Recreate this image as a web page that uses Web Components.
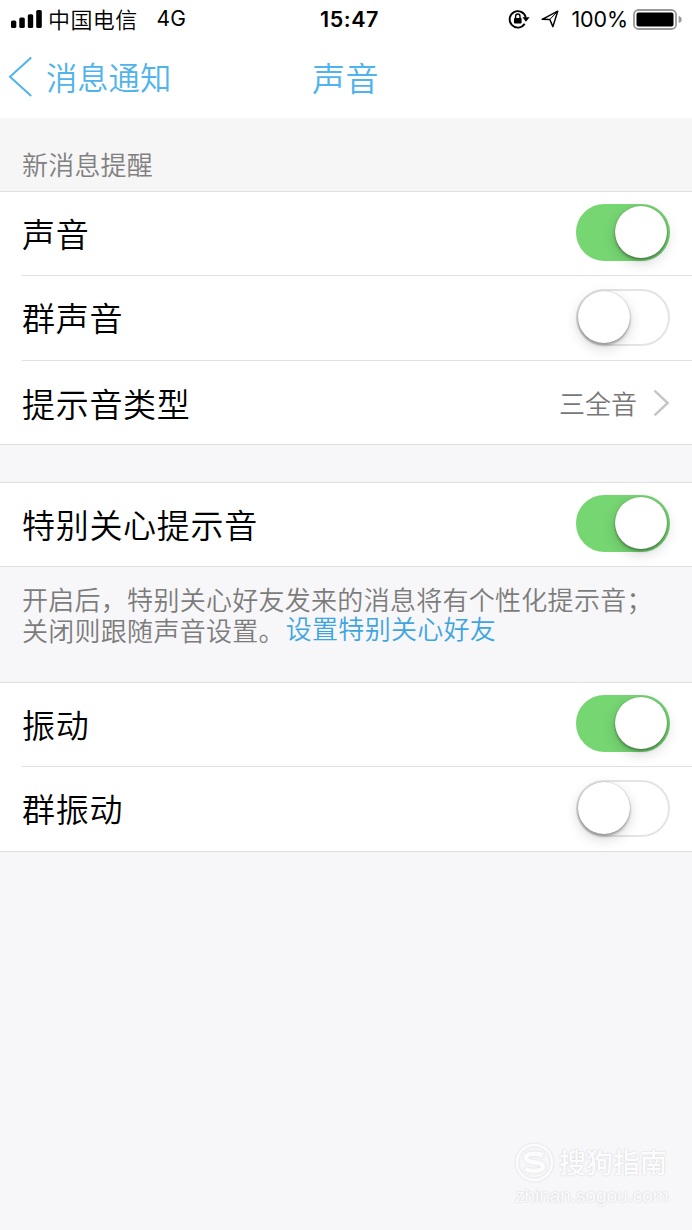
<!DOCTYPE html>
<html lang="zh-CN">
<head>
<meta charset="utf-8">
<title>声音</title>
<style>
html,body{margin:0;background:#f7f7f9}
body{font-family:"Noto Sans CJK SC","Noto Sans",sans-serif;color:#000;font-weight:350}
</style>
</head>
<body>
<settings-screen></settings-screen>
<script>
const define=(name,html,setup)=>customElements.define(name,class extends HTMLElement{
  constructor(){super();this.attachShadow({mode:'open'}).innerHTML=html;}
  connectedCallback(){if(setup)setup(this,this.shadowRoot);}
});

define('status-bar',`
<style>
:host{display:grid;grid-template-columns:1fr auto 1fr;align-items:center;height:38px;padding:0 10px 0 11px;font-size:22px;line-height:38px;box-sizing:border-box}
.side{display:flex;align-items:center;height:38px}
.right{justify-content:flex-end}
.latin{font-family:Inter,sans-serif;font-size:21.5px;font-weight:400}
.carrier{margin:-3px 0 0 6px;letter-spacing:.4px}
.net{margin-left:19px;font-size:21px}
.time{font-family:Inter,sans-serif;font-weight:600;font-size:21.5px;letter-spacing:.55px;padding-left:6px}
.pct{margin:0 5px 0 12px;letter-spacing:-.1px}
svg{display:block;flex:none}
</style>
<div class="side">
<svg width="31" height="19" viewBox="0 0 31 19"><rect x="0" y="10.5" width="5.3" height="7.5" rx="1.6"/><rect x="8.3" y="7.5" width="5.5" height="10.5" rx="1.6"/><rect x="16.8" y="4.2" width="5.4" height="13.8" rx="1.6"/><rect x="25.2" y="0" width="5.6" height="18" rx="1.6"/></svg>
<span class="carrier">中国电信</span><span class="latin net">4G</span></div>
<div class="time">15:47</div>
<div class="side right">
<svg width="22" height="20" viewBox="0 0 22 20"><path d="M16.7 14.8A8.2 8.2 0 1 1 17.8 8.5" fill="none" stroke="#000" stroke-width="1.8"/><path d="M14.4 8.2h7.2L18 12.7z"/><rect x="6" y="8.9" width="7.6" height="5.7" rx=".8"/><path d="M7.6 9V7.2a2.2 2.2 0 0 1 4.4 0V9" fill="none" stroke="#000" stroke-width="1.4"/></svg>
<svg width="18" height="18" viewBox="0 0 18 18" style="margin-left:11px"><path d="M16.700 1.200 1.200 9.300l7.600.200 3.100 7.100z" fill="none" stroke="#000" stroke-width="1.500" stroke-linejoin="round"/><path d="M16.700 1.200 8.800 9.500" stroke="#000" stroke-width="1"/></svg>
<span class="latin pct">100%</span>
<svg width="49" height="21" viewBox="0 0 49 21"><rect x="1" y="1" width="42" height="19" rx="4.5" fill="#fff" stroke="#999" stroke-width="1.8"/><rect x="3.5" y="3.5" width="37" height="14" rx="2"/><path d="M45.7 7q3 1 3 3.5t-3 3.5z" fill="#999"/></svg>
</div>`);

define('nav-bar',`
<style>
:host{display:grid;grid-template-columns:1fr auto 1fr;align-items:center;height:78px;box-sizing:border-box;color:#4fb3ee;padding:0 9px 0 8px}
.back{display:flex;align-items:center;font-size:31.3px;line-height:40px;white-space:nowrap}
svg{display:block}
.back span{margin-left:12px}
h1{margin:0;font-size:33px;font-weight:inherit;line-height:40px;letter-spacing:.4px}
</style>
<div class="back"><svg width="26" height="42" viewBox="0 0 26 42"><path d="M23.2 1.5 2 20.8 23.2 40" fill="none" stroke="currentColor" stroke-width="2"/></svg><span><slot name="back"></slot></span></div>
<h1><slot></slot></h1>`);

define('section-title',`
<style>
:host{display:flex;align-items:flex-end;height:73px;box-sizing:border-box;padding:0 22px 8px;background:#f6f6f7;color:#808080;font-size:26px;line-height:38px;letter-spacing:.2px}
</style><slot></slot>`);

define('cell-group',`
<style>
:host{display:block;background:#fff;border-top:1px solid #dedfe1;border-bottom:1px solid #dedfe1}
::slotted(setting-cell:not(:first-child)){border-top:1px solid #e1e1e3}
</style><slot></slot>`);

define('setting-cell',`
<style>
:host{display:flex;align-items:center;justify-content:space-between;height:var(--h,84px);margin-left:22px;padding:0 22px var(--lift,2px) 0;box-sizing:border-box}
.label{font-size:33px;line-height:48px;letter-spacing:.7px;white-space:nowrap}
</style><span class="label"><slot></slot></span><slot name="value"></slot>`);

define('toggle-switch',`
<style>
:host{display:block;width:94px;height:57px;border-radius:29px;box-sizing:border-box;border:2.5px solid #e4e4e4;background:#fff}
.knob{width:52px;height:52px;border-radius:50%;background:#fff;box-shadow:0 2px 3px rgba(0,0,0,.32),0 5px 14px rgba(0,0,0,.16),0 0 1px rgba(0,0,0,.3)}
:host([on]){background:#76d672;border-color:#76d672}
:host([on]) .knob{margin-left:37px}
</style><div class="knob"></div>`,(el)=>{el.setAttribute('role','switch');el.setAttribute('aria-checked',el.hasAttribute('on'));});

define('cell-value',`
<style>
:host{display:flex;align-items:center;font-size:26px;line-height:38px;color:#777}
svg{display:block;margin-left:16px}
</style><slot></slot><svg width="17" height="28" viewBox="0 0 17 28"><path d="M1.5 1.7 14.7 14 1.5 26.3" fill="none" stroke="#c5c5c8" stroke-width="2.4"/></svg>`);

define('foot-note',`
<style>
:host{display:block;height:115px;box-sizing:border-box;padding:19px 22px 0;color:#7c7c7c;font-family:"Liberation Sans","Noto Sans CJK SC",sans-serif;font-size:26px;line-height:31px;letter-spacing:.28px;white-space:nowrap}
.row{display:flex}
.link{color:#3fa5e0;margin:-2px 0 0 1px}
</style><div class="row"><slot name="first"></slot></div><div class="row"><slot></slot><span class="link"><slot name="link"></slot></span></div>`);

define('site-watermark',`
<style>
:host{position:absolute;right:23px;bottom:21px;width:154px;color:#fcfcfd;text-shadow:0 0 2px #d2d3d6,0 0 1px #dcdde0}
.top{display:flex;align-items:center;height:40px;font-size:27px;line-height:38px;font-weight:500}
svg{display:block;margin-right:5px;margin-top:-2px;filter:drop-shadow(0 0 1px #d6d7da)}
.top span{margin-top:-2px}
.url{font-family:"Liberation Sans",sans-serif;font-size:19px;line-height:26px;white-space:nowrap;letter-spacing:-.05px;font-weight:400}
</style>
<div class="top"><svg width="39" height="39" viewBox="0 0 39 39" fill="none" stroke="#fcfcfd"><circle cx="19.5" cy="19.5" r="17.5" stroke-width="2.5"/><path d="M28 12.5C23 9.5 10.5 10 11 15.5c.5 5 17 2.5 17 8 0 5-12 5.500-18 2.500" stroke-width="4.500"/></svg><span>搜狗指南</span></div>
<div class="url">zhinan.sogou.com</div>`);

define('settings-screen',`
<style>
:host{display:block;position:relative;width:692px;height:1230px;overflow:hidden;background:#f7f7f9}
header{background:#fff;height:118px}
.gap{height:37px}
</style>
<header><status-bar></status-bar><nav-bar><span slot="back">消息通知</span>声音</nav-bar></header>
<section-title>新消息提醒</section-title>
<cell-group>
<setting-cell style="--h:83px">声音<toggle-switch slot="value" on></toggle-switch></setting-cell>
<setting-cell style="--h:85px">群声音<toggle-switch slot="value"></toggle-switch></setting-cell>
<setting-cell style="--h:84px;--lift:0px">提示音类型<cell-value slot="value">三全音</cell-value></setting-cell>
</cell-group>
<div class="gap"></div>
<cell-group><setting-cell style="--h:83px">特别关心提示音<toggle-switch slot="value" on></toggle-switch></setting-cell></cell-group>
<foot-note><span slot="first">开启后，特别关心好友发来的消息将有个性化提示音；</span>关闭则跟随声音设置。<span slot="link">设置特别关心好友</span></foot-note>
<cell-group>
<setting-cell style="--h:83px">振动<toggle-switch slot="value" on></toggle-switch></setting-cell>
<setting-cell style="--h:85px">群振动<toggle-switch slot="value"></toggle-switch></setting-cell>
</cell-group>
<site-watermark></site-watermark>`);
</script>
</body>
</html>
